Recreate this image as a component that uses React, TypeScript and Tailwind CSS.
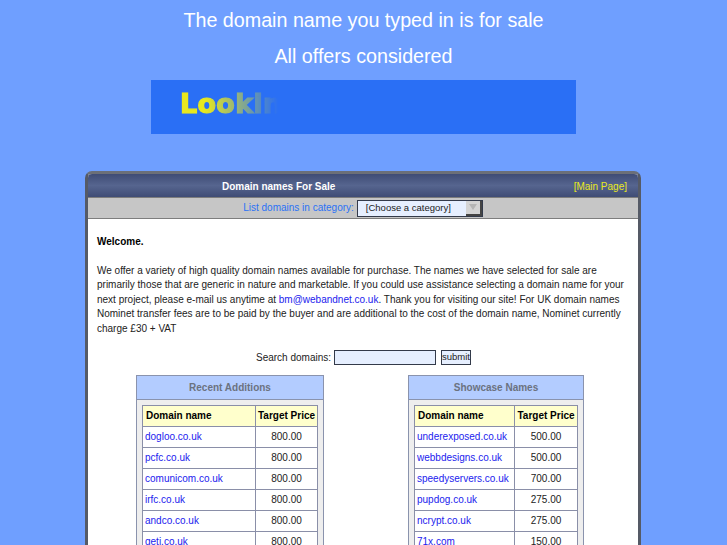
const recent = [
  ["dogloo.co.uk", "800.00"],
  ["pcfc.co.uk", "800.00"],
  ["comunicom.co.uk", "800.00"],
  ["irfc.co.uk", "800.00"],
  ["andco.co.uk", "800.00"],
  ["geti.co.uk", "800.00"],
];

const showcase = [
  ["underexposed.co.uk", "500.00"],
  ["webbdesigns.co.uk", "500.00"],
  ["speedyservers.co.uk", "700.00"],
  ["pupdog.co.uk", "275.00"],
  ["ncrypt.co.uk", "275.00"],
  ["71x.com", "150.00"],
];

function DomainPanel({
  title,
  rows,
  nameCol,
  priceCol,
  panelClass,
}: {
  title: string;
  rows: string[][];
  nameCol: string;
  priceCol: string;
  panelClass: string;
}) {
  return (
    <div className={`shrink-0 border border-[#8a93ad] bg-[#eeeeee] ${panelClass}`}>
      <div className="flex h-[24px] items-center justify-center border-b border-[#8a93ad] bg-[#b3ccff] text-[10px] font-bold text-[#6b7280]">
        {title}
      </div>
      <div className="px-[5px] pt-[5px]">
        <div className="border border-[#8a8fa8] bg-white">
          <div className="flex h-[20px] bg-[#ffffcc] text-[10px] font-bold text-black">
            <div className={`flex items-center border-r border-[#8a8fa8] pb-[2px] pl-[3px] ${nameCol}`}>Domain name</div>
            <div className={`flex items-center justify-center pb-[2px] ${priceCol}`}>Target Price</div>
          </div>
          {rows.map(([name, price]) => (
            <div key={name} className="flex h-[21px] border-t border-[#8a8fa8] text-[10px]">
              <div className={`flex items-center border-r border-[#8a8fa8] pb-[2px] pl-[2px] text-[#2222ee] ${nameCol}`}>{name}</div>
              <div className={`flex items-center justify-center pb-[2px] text-[#222222] ${priceCol}`}>{price}</div>
            </div>
          ))}
        </div>
      </div>
    </div>
  );
}

export default function App() {
  return (
    <div className="h-[545px] w-[727px] overflow-hidden bg-[#6f9fff] font-['Liberation_Sans',Arial,sans-serif]">
      {/* page heading */}
      <div className="flex h-[80px] flex-col items-center pt-[8px] text-[19.7px] leading-[24px] text-white">
        <div>The domain name you typed in is for sale</div>
        <div className="mt-[12px]">All offers considered</div>
      </div>

      {/* banner, the word fades out into the blue */}
      <div className="ml-[151px] flex h-[54px] w-[425px] items-center bg-[#2a6ff5] pb-[6px] pl-[29px]">
        <span className="w-[100px] overflow-hidden whitespace-nowrap font-['DejaVu_Sans',sans-serif] text-[27px] font-bold leading-[32px] tracking-[0.3px] text-[#e8e81e] [-webkit-text-stroke:1.2px_#e8e81e] [mask-image:linear-gradient(to_right,#000_25%,transparent_98%)]">
          Lookin
        </span>
      </div>

      {/* main window */}
      <div className="ml-[85px] mt-[37px] w-[556px] rounded-t-[7px] border-x-[3px] border-t-[3px] border-x-[#555a66] border-t-[#6b6f78] bg-white">
        <div className="flex h-[23px] items-center rounded-t-[4px] bg-linear-to-b from-[#3f4c75] via-[#56658f] to-[#3f4c75] pt-[1px] text-[10px]">
          <div className="ml-[134px] font-bold text-white">Domain names For Sale</div>
          <div className="ml-auto pr-[11px] text-[#e8e81e]">[Main Page]</div>
        </div>
        <div className="flex h-[22px] items-center justify-center gap-[3px] border-y border-y-[#7d7d7d] bg-[#c6c6c6] text-[10px] text-[#2a72f5]">
          <span className="pb-[1px]">List domains in category:</span>
          <div className="flex h-[17px] w-[126px] items-center justify-between border border-[#333a4a] bg-[#e6efff] pl-[8px] text-[9.5px] text-[#222222]">
            <span>[Choose a category]</span>
            <span className="flex h-[15px] w-[16px] items-center justify-center border-r-2 border-b-2 border-r-[#444444] border-b-[#444444] bg-[#d4d4d4]">
              <svg width="8" height="6" viewBox="0 0 8 6">
                <path d="M0 0h8L4 6z" fill="#b5b5b5" />
              </svg>
            </span>
          </div>
        </div>

        <div className="px-[9px] pt-[16px] text-[10px] leading-[14.5px] text-[#222222]">
          <div className="font-bold text-black">Welcome.</div>
          <p className="mt-[14px]">
            We offer a variety of high quality domain names available for purchase. The names we have selected for sale are
            <br />
            primarily those that are generic in nature and marketable. If you could use assistance selecting a domain name for your
            <br />
            next project, please e-mail us anytime at <span className="text-[#2222ee]">bm@webandnet.co.uk</span>. Thank you for visiting our site! For UK domain names
            <br />
            Nominet transfer fees are to be paid by the buyer and are additional to the cost of the domain name, Nominet currently
            <br />
            charge £30 + VAT
          </p>
        </div>

        <div className="mt-[14px] flex h-[15px] items-center justify-center gap-[3px] pl-[1px] text-[10px] text-[#222222]">
          <span>Search domains:</span>
          <div className="h-[15px] w-[102px] border border-[#333a4a] bg-[#e6efff]" />
          <div className="ml-[2px] flex h-[15px] w-[30px] items-center justify-center border border-[#333a4a] bg-[#e6efff] text-[9.5px]">submit</div>
        </div>

        <div className="mt-[10px] flex pl-[48px]">
          <DomainPanel title="Recent Additions" rows={recent} nameCol="w-[113px]" priceCol="w-[61px]" panelClass="w-[188px]" />
          <DomainPanel title="Showcase Names" rows={showcase} nameCol="w-[100px]" priceCol="w-[62px]" panelClass="ml-[84px] w-[176px]" />
        </div>
      </div>
    </div>
  );
}
